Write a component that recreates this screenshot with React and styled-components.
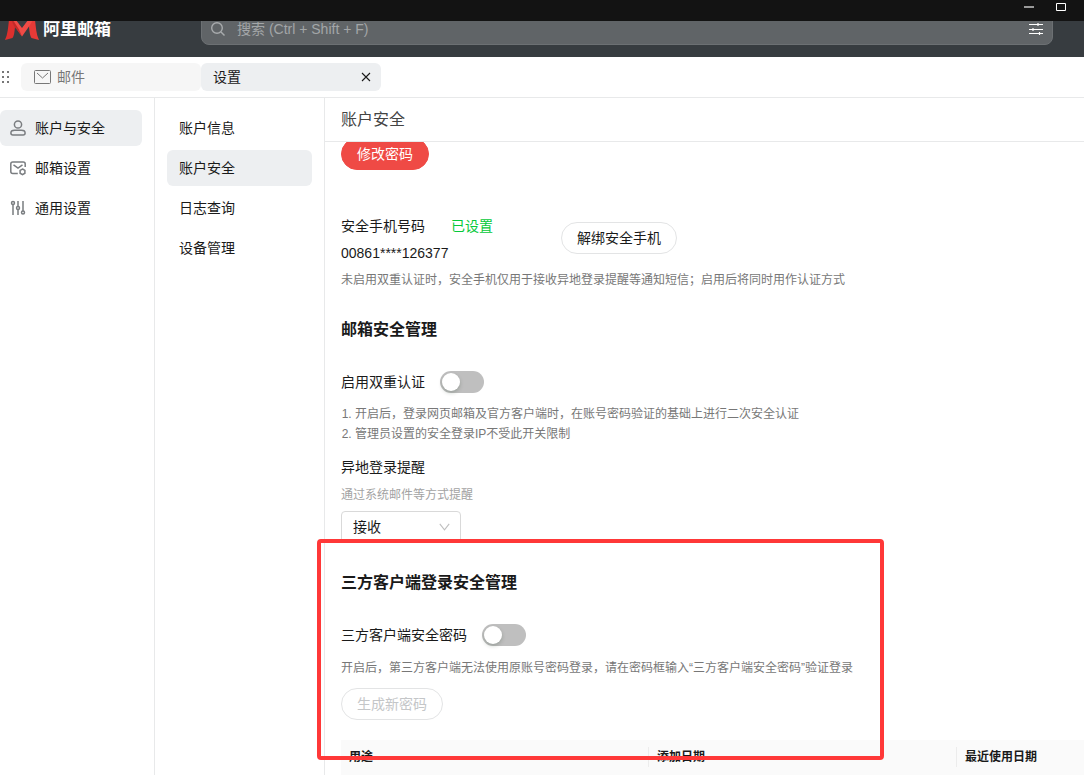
import { useState } from 'react';
import styled, { createGlobalStyle } from 'styled-components';

const GlobalStyle = createGlobalStyle`
  * {
    box-sizing: border-box;
  }

  body {
    margin: 0;
    background: #fff;
    color: #1a1a1a;
    font-family: 'Liberation Sans', 'Noto Sans CJK SC', sans-serif;
    font-size: 14px;
    line-height: 22px;
  }

  button, select {
    font: inherit;
    cursor: pointer;
  }
`;

const Shell = styled.div`
  position: relative;
  display: flex;
  flex-direction: column;
  height: 100vh;
  overflow: hidden;
`;

const TitleBar = styled.div`
  display: flex;
  flex: none;
  justify-content: flex-end;
  gap: 12px;
  height: 21px;
  padding-right: 13px;
  background: #131313;
`;

const WindowButton = styled.button`
  display: flex;
  width: 20px;
  height: 14px;
  padding: 0;
  border: 0;
  background: none;
`;

const Header = styled.header`
  display: flex;
  flex: none;
  align-items: flex-end;
  height: 36px;
  padding: 0 31px 12px 5px;
  overflow: hidden;
  background: #373c40;
`;

const Brand = styled.a`
  display: flex;
  flex: none;
  align-items: center;
  gap: 4px;
  width: 196px;
  height: 30px;
  color: #fff;
  font-size: 17px;
  font-weight: 700;
  line-height: 18px;
  text-decoration: none;
`;

const Search = styled.label`
  display: flex;
  flex: 1;
  align-items: center;
  gap: 11px;
  height: 32px;
  padding: 0 9px 0 8px;
  border: 1px solid #6c7073;
  border-radius: 8px;
  background: #606467;
  color: #a8abad;
`;

const SearchInput = styled.input`
  flex: 1;
  min-width: 0;
  padding: 0;
  border: 0;
  outline: 0;
  background: none;
  color: #fff;
  font: inherit;

  &::placeholder {
    color: #a3a6a8;
    opacity: 1;
  }
`;

const IconButton = styled.button`
  display: flex;
  padding: 0;
  border: 0;
  background: none;
  color: ${({ $color }) => $color};
`;

const TabBar = styled.div`
  display: flex;
  flex: none;
  align-items: center;
  height: 41px;
  border-bottom: 1px solid #e8e9ea;
`;

const DragHandle = styled.span`
  display: flex;
  width: 21px;
`;

const Tab = styled.div`
  display: flex;
  align-items: center;
  gap: 5px;
  width: 180px;
  height: 28px;
  padding: 0 10px 0 12px;
  border-radius: 6px;
  background: ${({ $active }) => ($active ? '#edeff1' : '#f6f6f6')};
  color: ${({ $active }) => ($active ? '#1a1a1a' : '#777')};
`;

const TabLabel = styled.span`
  flex: 1;
`;

const Body = styled.div`
  display: flex;
  flex: 1;
  min-height: 0;
`;

const SideNav = styled.nav`
  display: flex;
  flex: none;
  flex-direction: column;
  gap: 4px;
  width: ${({ $width }) => $width};
  padding: 12px 12px 0 ${({ $inset }) => $inset};
  border-right: 1px solid #e8e9ea;
`;

const NavItem = styled.a`
  display: flex;
  align-items: center;
  gap: 9px;
  height: 36px;
  padding: 0 ${({ $pad }) => $pad};
  border-radius: 6px;
  background: ${({ $active }) => ($active ? '#edeff1' : 'transparent')};
  color: #1a1a1a;
  text-decoration: none;

  svg {
    color: #7a7d80;
  }
`;

const Main = styled.main`
  display: flex;
  flex: 1;
  flex-direction: column;
  min-width: 0;
`;

const PageTitle = styled.h1`
  flex: none;
  margin: 0;
  padding: 11px 16px 10px;
  border-bottom: 1px solid #e8e9ea;
  color: #444;
  font-size: 16px;
  font-weight: 400;
`;

const Scroller = styled.div`
  flex: 1;
  min-height: 0;
  padding-left: 16px;
  overflow: hidden;
`;

const PasswordRow = styled.div`
  margin-top: -4px;
`;

const PillButton = styled.button`
  height: 32px;
  padding: 0 15px;
  border: 1px solid ${({ $primary }) => ($primary ? '#ef4a45' : '#e3e4e5')};
  border-radius: 16px;
  background: ${({ $primary }) => ($primary ? '#ef4a45' : '#fff')};
  color: ${({ $primary }) => ($primary ? '#fff' : '#1a1a1a')};
  line-height: 22px;

  &:disabled {
    color: #c4c6c8;
    cursor: default;
  }
`;

const PhoneRow = styled.section`
  display: grid;
  grid-template-columns: 220px auto;
  justify-content: start;
  align-items: end;
  margin-top: 45px;
`;

const PhoneAction = styled.div`
  padding-bottom: 10px;
  line-height: 0;
`;

const PhoneLabel = styled.div`
  display: flex;
  gap: 26px;
  margin-bottom: 5px;
`;

const Status = styled.span`
  color: #05c93a;
`;

const Hint = styled.p`
  margin: ${({ $top }) => $top} 0 0;
  color: ${({ $light }) => ($light ? '#a3a3a3' : '#777')};
  font-size: 12px;
  line-height: 20px;
`;

const SectionTitle = styled.h2`
  margin: 28px 0 29px;
  font-size: 16px;
  font-weight: 700;
  line-height: 24px;
`;

const SwitchRow = styled.label`
  display: flex;
  align-items: center;
  gap: 15px;
  width: max-content;
`;

const Switch = styled.input.attrs({ type: 'checkbox', role: 'switch' })`
  width: 44px;
  height: 22px;
  margin: 0;
  padding: 2px;
  border-radius: 11px;
  appearance: none;
  background: #bfbfbf;
  cursor: pointer;

  &::before {
    display: block;
    width: 18px;
    height: 18px;
    border-radius: 50%;
    background: #fff;
    box-shadow: 0 2px 4px rgba(0, 35, 11, 0.2);
    content: '';
  }

  &:checked {
    background: #ef4a45;
  }

  &:checked::before {
    margin-left: 22px;
  }
`;

const Rules = styled.ol`
  margin: 11px 0 12px;
  padding-left: 14px;
  color: #777;
  font-size: 12px;
  line-height: 20px;
`;

const SelectBox = styled.div`
  display: grid;
  align-items: center;
  width: 120px;
  margin-top: 6px;

  > * {
    grid-area: 1 / 1;
  }

  svg {
    justify-self: end;
    margin-right: 11px;
    color: #bfbfbf;
    pointer-events: none;
  }
`;

const Select = styled.select`
  width: 100%;
  height: 32px;
  padding: 0 30px 0 11px;
  border: 1px solid #d9d9d9;
  border-radius: 4px;
  appearance: none;
  background: #fff;
  color: #1a1a1a;
`;

const GenerateRow = styled.div`
  margin: 10px 0 20px;
`;

const Table = styled.table`
  width: 100%;
  border-collapse: collapse;
  table-layout: fixed;
  background: #fafafa;
`;

const HeadCell = styled.th`
  width: ${({ $width }) => $width};
  padding: 7px 0 8px;
  font-size: 12px;
  line-height: 20px;
  text-align: left;

  span {
    display: block;
    padding-left: 8px;
  }

  &:not(:last-child) span {
    border-right: 1px solid #ececec;
  }
`;

const Highlight = styled.div`
  position: absolute;
  top: 539px;
  left: 317px;
  width: 567px;
  height: 221px;
  border: 4px solid #ff3838;
  border-radius: 4px;
  pointer-events: none;
`;

const LogoMark = () => (
  <svg width="34" height="20" viewBox="0 0 34 20" aria-hidden="true">
    <path d="M0 20C3 14 3 7 4 0h7l-1 7C9.500 12 9 16 7.500 18Z" fill="#dc302e" />
    <path d="M34 20C31 14 31 7 30 0h-7l1 7c.5 5 1 9 2.500 11Z" fill="#e63a37" />
    <path d="M6 0h5l6 8 6-8h5l-3 5-8 11.500L9 5Z" fill="#f04b46" />
    <path d="M6 0h2l6 9.500 3 7L9 6Z" fill="#c22a29" />
  </svg>
);

const SearchIcon = () => (
  <svg width="16" height="16" viewBox="0 0 16 16" fill="none" stroke="currentColor" strokeWidth="1.4" aria-hidden="true">
    <circle cx="7" cy="7" r="5.300" />
    <path d="M11 11l3.500 3.500" />
  </svg>
);

const FilterIcon = () => (
  <svg width="14" height="14" viewBox="0 0 14 14" fill="none" stroke="currentColor" strokeWidth="1.2" aria-hidden="true">
    <path d="M0 2.500h14M0 7.500h14M0 11.500h14M9 1v3M4 6v3M10.500 10v3" />
  </svg>
);

const MailIcon = () => (
  <svg width="19" height="14" viewBox="0 0 19 14" fill="none" stroke="currentColor" aria-hidden="true">
    <rect x="1.500" y=".5" width="16" height="13" rx="1" />
    <path d="M4 3l5.500 5L15 3" />
  </svg>
);

const CloseIcon = () => (
  <svg width="10" height="10" viewBox="0 0 10 10" fill="none" stroke="currentColor" strokeWidth="1.1" aria-hidden="true">
    <path d="M1 1l8 8M9 1L1 9" />
  </svg>
);

const DotsIcon = () => (
  <svg width="10" height="14" viewBox="0 0 10 14" fill="#777" aria-hidden="true">
    {[1, 6, 11].map((y) => (
      <path key={y} d={`M2 ${y}h2v2h-2zM7 ${y}h2v2h-2z`} />
    ))}
  </svg>
);

const UserIcon = () => (
  <svg width="16" height="16" viewBox="0 0 16 16" fill="none" stroke="currentColor" strokeWidth="1.5" aria-hidden="true">
    <circle cx="8" cy="4.500" r="3.600" />
    <path d="M4.500 10.200h7c2.200 0 3.600 1 3.600 2.700 0 1.200-.8 2-2 2H2.900c-1.200 0-2-.8-2-2 0-1.700 1.400-2.700 3.600-2.700Z" />
  </svg>
);

const MailSettingsIcon = () => (
  <svg width="16" height="16" viewBox="0 0 16 16" fill="none" stroke="currentColor" strokeWidth="1.5" aria-hidden="true">
    <path d="M15.200 7V4c0-1.200-.8-2-2-2H2.800c-1.200 0-2 .8-2 2v7.500c0 1.200.8 2 2 2h5" />
    <path d="M3.500 4.800L8 8l4.500-3.200" />
    <path d="M12.500 9l2.400 1.400v2.800l-2.400 1.400-2.400-1.400v-2.800Z" />
  </svg>
);

const SlidersIcon = () => (
  <svg width="16" height="16" viewBox="0 0 16 16" fill="none" stroke="currentColor" strokeWidth="1.5" aria-hidden="true">
    <circle cx="3" cy="3" r="1.500" />
    <circle cx="8" cy="8" r="1.500" />
    <circle cx="13" cy="12.500" r="1.500" />
    <path d="M3 4.500V15M8 1v5.500M8 9.500V15M13 1v10" />
  </svg>
);

const ChevronIcon = () => (
  <svg width="11" height="8" viewBox="0 0 11 8" fill="none" stroke="currentColor" strokeWidth="1.1" aria-hidden="true">
    <path d="M.8.8l4.700 6 4.700-6" />
  </svg>
);

const sections = [
  { label: '账户与安全', Icon: UserIcon },
  { label: '邮箱设置', Icon: MailSettingsIcon },
  { label: '通用设置', Icon: SlidersIcon },
];

const pages = ['账户信息', '账户安全', '日志查询', '设备管理'];

const App = () => {
  const [twoFactor, setTwoFactor] = useState(false);
  const [clientPassword, setClientPassword] = useState(false);

  return (
    <Shell>
      <GlobalStyle />
      <TitleBar>
        <WindowButton aria-label="最小化">
          <svg width="20" height="14" viewBox="0 0 20 14">
            <path d="M5 6h10v2H5z" fill="#999" />
          </svg>
        </WindowButton>
        <WindowButton aria-label="最大化">
          <svg width="20" height="14" viewBox="0 0 20 14">
            <path d="M5.500 3.500h9v7h-9z" fill="none" stroke="#fff" />
          </svg>
        </WindowButton>
      </TitleBar>

      <Header>
        <Brand href="#">
          <LogoMark />
          阿里邮箱
        </Brand>
        <Search>
          <SearchIcon />
          <SearchInput placeholder="搜索 (Ctrl + Shift + F)" aria-label="搜索" />
          <IconButton $color="#fff" aria-label="高级搜索">
            <FilterIcon />
          </IconButton>
        </Search>
      </Header>

      <TabBar>
        <DragHandle>
          <DotsIcon />
        </DragHandle>
        <Tab>
          <MailIcon />
          <TabLabel>邮件</TabLabel>
        </Tab>
        <Tab $active>
          <TabLabel>设置</TabLabel>
          <IconButton $color="#1a1a1a" aria-label="关闭">
            <CloseIcon />
          </IconButton>
        </Tab>
      </TabBar>

      <Body>
        <SideNav $width="155px" $inset="0">
          {sections.map(({ label, Icon }, i) => (
            <NavItem key={label} href="#" $active={i === 0} $pad="10px">
              <Icon />
              {label}
            </NavItem>
          ))}
        </SideNav>
        <SideNav $width="170px" $inset="12px">
          {pages.map((label) => (
            <NavItem key={label} href="#" $active={label === '账户安全'} $pad="12px">
              {label}
            </NavItem>
          ))}
        </SideNav>

        <Main>
          <PageTitle>账户安全</PageTitle>
          <Scroller>
            <PasswordRow>
              <PillButton $primary>修改密码</PillButton>
            </PasswordRow>

            <PhoneRow>
              <div>
                <PhoneLabel>
                  安全手机号码
                  <Status>已设置</Status>
                </PhoneLabel>
                00861****126377
              </div>
              <PhoneAction>
                <PillButton>解绑安全手机</PillButton>
              </PhoneAction>
            </PhoneRow>
            <Hint $top="6px">
              未启用双重认证时，安全手机仅用于接收异地登录提醒等通知短信；启用后将同时用作认证方式
            </Hint>

            <SectionTitle>邮箱安全管理</SectionTitle>
            <SwitchRow>
              启用双重认证
              <Switch
                checked={twoFactor}
                onChange={(e) => setTwoFactor(e.target.checked)}
              />
            </SwitchRow>
            <Rules>
              <li>开启后，登录网页邮箱及官方客户端时，在账号密码验证的基础上进行二次安全认证</li>
              <li>管理员设置的安全登录IP不受此开关限制</li>
            </Rules>

            <label htmlFor="remote-login">异地登录提醒</label>
            <Hint $top="7px" $light>
              通过系统邮件等方式提醒
            </Hint>
            <SelectBox>
              <Select id="remote-login" defaultValue="on">
                <option value="on">接收</option>
                <option value="off">不接收</option>
              </Select>
              <ChevronIcon />
            </SelectBox>

            <SectionTitle>三方客户端登录安全管理</SectionTitle>
            <SwitchRow>
              三方客户端安全密码
              <Switch
                checked={clientPassword}
                onChange={(e) => setClientPassword(e.target.checked)}
              />
            </SwitchRow>
            <Hint $top="12px">
              开启后，第三方客户端无法使用原账号密码登录，请在密码框输入“三方客户端安全密码”验证登录
            </Hint>
            <GenerateRow>
              <PillButton disabled={!clientPassword}>生成新密码</PillButton>
            </GenerateRow>

            <Table>
              <thead>
                <tr>
                  <HeadCell $width="308px"><span>用途</span></HeadCell>
                  <HeadCell $width="308px"><span>添加日期</span></HeadCell>
                  <HeadCell><span>最近使用日期</span></HeadCell>
                </tr>
              </thead>
            </Table>
          </Scroller>
        </Main>
      </Body>

      <Highlight />
    </Shell>
  );
};

export default App;
